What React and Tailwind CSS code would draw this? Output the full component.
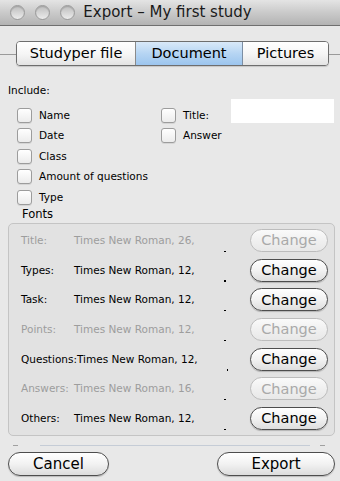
import React from "react";

const font = { fontFamily: '"DejaVu Sans", "Liberation Sans", sans-serif' };

function Light() {
  return (
    <div className="w-[15px] h-[15px] rounded-full border border-[#9a9a9a] bg-gradient-to-b from-[#bdbdbd] to-[#ececec] shadow-[inset_0_1px_1px_rgba(0,0,0,0.15)]" />
  );
}

function Check({ label }) {
  return (
    <div className="flex items-center gap-[7px] h-[20.5px]">
      <div className="shrink-0 w-[15px] h-[15px] rounded-[3px] border border-[#9c9c9c] bg-gradient-to-b from-white to-[#ececec] shadow-[0_1px_0_rgba(0,0,0,0.08)]" />
      <span className="text-[10.5px] leading-[13px] text-black whitespace-nowrap">{label}</span>
    </div>
  );
}

function ChangeBtn({ disabled }) {
  return (
    <div
      className={
        disabled
          ? "ml-auto w-[78px] h-[23px] rounded-full border border-[#bcbcbc] bg-gradient-to-b from-[#fafafa] via-[#f0f0f0] to-[#e8e8e8] flex items-center justify-center text-[14.5px] leading-none text-[#a9a9a9]"
          : "ml-auto w-[78px] h-[23px] rounded-full border border-[#4d4d4d] bg-gradient-to-b from-white via-[#f2f2f2] to-[#dedede] shadow-[0_1px_1px_rgba(0,0,0,0.2)] flex items-center justify-center text-[14.5px] leading-none text-black"
      }
    >
      Change
    </div>
  );
}

function FontRow({ label, value, disabled }) {
  const c = disabled ? "text-[#9d9d9d]" : "text-black";
  return (
    <div className="flex items-center h-[23px]">
      <span className={"min-w-[53px] text-[10.5px] leading-[13px] whitespace-nowrap " + c}>{label}</span>
      <span className={"w-[150px] text-[10.5px] leading-[13px] whitespace-nowrap " + c}>{value}</span>
      <div className="self-end w-[1.5px] h-[1.5px] bg-black" />
      <ChangeBtn disabled={disabled} />
    </div>
  );
}

function BigBtn({ children, w }) {
  return (
    <div
      className={
        "h-[24px] rounded-full border border-[#4d4d4d] bg-gradient-to-b from-white via-[#f2f2f2] to-[#dcdcdc] shadow-[0_1px_1px_rgba(0,0,0,0.2)] flex items-center justify-center text-[15px] leading-none text-black " +
        w
      }
    >
      {children}
    </div>
  );
}

export default function App() {
  const rows = [
    ["Title:", "Times New Roman, 26,", true],
    ["Types:", "Times New Roman, 12,", false],
    ["Task:", "Times New Roman, 12,", false],
    ["Points:", "Times New Roman, 12,", true],
    ["Questions:", "Times New Roman, 12,", false],
    ["Answers:", "Times New Roman, 16,", true],
    ["Others:", "Times New Roman, 12,", false],
  ];
  return (
    <div style={font} className="w-[340px] h-[481px] bg-[#e8e8e8] flex flex-col overflow-hidden">
      {/* title bar */}
      <div className="h-[26px] shrink-0 border-b border-[#6f6f6f] bg-gradient-to-b from-[#e4e4e4] via-[#cacaca] to-[#b3b3b3] flex items-center">
        <div className="flex items-center gap-[10px] pl-[10px]">
          <Light />
          <Light />
          <Light />
        </div>
        <div className="flex-1 text-center text-[15px] leading-none text-[#1a1a1a] pr-[80px] pl-[0px]">
          Export – My first study
        </div>
      </div>

      {/* tabs */}
      <div className="mt-[15px] flex items-center h-[25px]">
        <div className="w-[16px] h-px bg-[#9a9a9a] mt-[2px]" />
        <div className="flex h-[25px] w-[313px] rounded-[4px] border border-[#6e6e6e] overflow-hidden shadow-[0_1px_1px_rgba(0,0,0,0.15)] text-[14.5px] leading-none text-black">
          <div className="w-[119px] flex items-center justify-center bg-gradient-to-b from-white via-[#f6f6f6] to-[#e4e4e4] border-r border-[#8a8a8a]">
            Studyper file
          </div>
          <div className="w-[107px] flex items-center justify-center bg-gradient-to-b from-[#d9e9f9] via-[#b6d5f3] to-[#9cc5ee] border-r border-[#7c8ea3]">
            Document
          </div>
          <div className="flex-1 flex items-center justify-center bg-gradient-to-b from-white via-[#f6f6f6] to-[#e4e4e4]">
            Pictures
          </div>
        </div>
        <div className="flex-1 h-px bg-[#9a9a9a] mt-[2px]" />
      </div>

      {/* include */}
      <div className="mt-[18px] ml-[8px] h-[13px] text-[10.5px] leading-[13px] text-black">Include:</div>
      <div className="mt-[8px] flex">
        <div className="w-[161px] shrink-0 pl-[17px] flex flex-col">
          <Check label="Name" />
          <Check label="Date" />
          <Check label="Class" />
          <Check label="Amount of questions" />
          <Check label="Type" />
        </div>
        <div className="flex flex-col">
          <div className="flex items-center h-[20.5px]">
            <div className="w-[70px] shrink-0">
              <Check label="Title:" />
            </div>
            <div className="-mt-[8px] w-[103px] h-[24px] bg-white" />
          </div>
          <Check label="Answer" />
        </div>
      </div>

      {/* fonts */}
      <div className="ml-[22px] h-[13px] text-[11.5px] leading-[13px] text-black">Fonts</div>
      <div className="mt-[2.5px] mx-[8px] w-[327px] rounded-[5px] border border-[#c4c4c4] bg-[#e2e2e2] pt-[5px] pb-[5px] pl-[12px] pr-[6px] flex flex-col gap-[6.7px]">
        {rows.map(([l, v, d]) => (
          <FontRow key={l} label={l} value={v} disabled={d} />
        ))}
      </div>

      {/* faint separator */}
      <div className="mt-[8.5px] h-px flex items-center px-[13px]">
        <div className="w-[5px] h-px bg-[#a0a0a0]" />
        <div className="ml-[22px] w-[270px] h-px bg-[#c5ccd6]" />
        <div className="ml-[10px] w-[5px] h-px bg-[#a0a0a0]" />
      </div>

      {/* buttons */}
      <div className="mt-[6.5px] flex justify-between pr-[5px] pl-[8px]">
        <BigBtn w="w-[101px]">Cancel</BigBtn>
        <BigBtn w="w-[118px]">Export</BigBtn>
      </div>
    </div>
  );
}
